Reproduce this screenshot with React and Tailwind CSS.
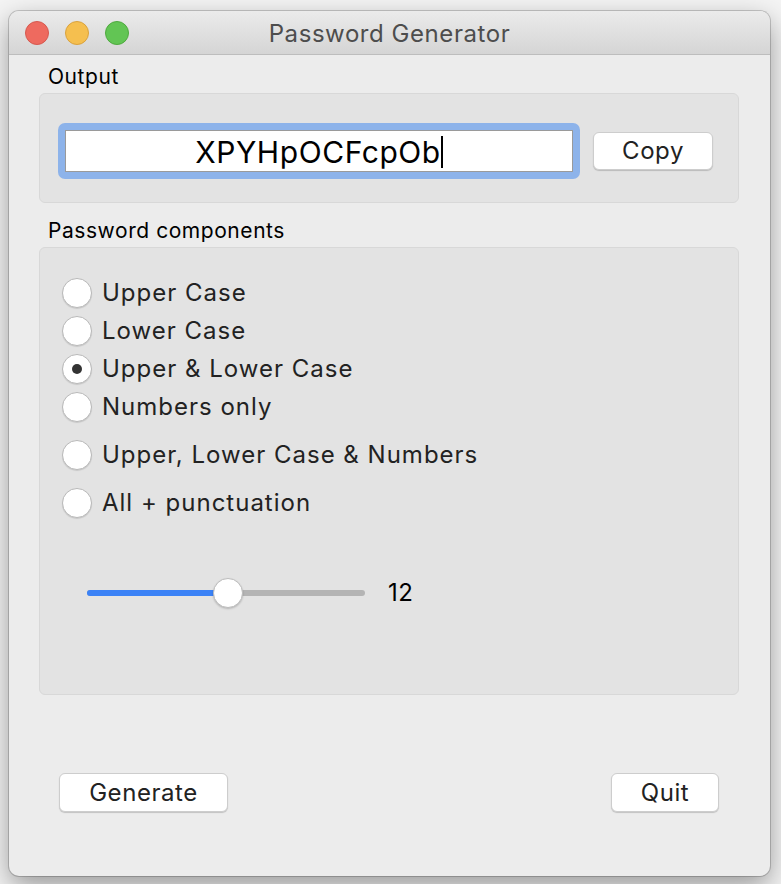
const font = { fontFamily: 'Inter, "Noto Sans", "Liberation Sans", sans-serif' };

const options = [
  { label: 'Upper Case', checked: false, gap: '' },
  { label: 'Lower Case', checked: false, gap: '' },
  { label: 'Upper & Lower Case', checked: true, gap: '' },
  { label: 'Numbers only', checked: false, gap: '' },
  { label: 'Upper, Lower Case & Numbers', checked: false, gap: 'mt-[10px]' },
  { label: 'All + punctuation', checked: false, gap: 'mt-[10px]' },
];

function Light({ bg, border }) {
  return <span className={`block w-[24px] h-[24px] rounded-full border ${bg} ${border}`} />;
}

function Radio({ label, checked, gap }) {
  return (
    <div className={`flex items-center h-[38px] ${gap}`}>
      <span className="flex items-center justify-center w-[30px] h-[30px] rounded-full bg-white border border-[#b9b9b9] shadow-[0_1px_1px_rgba(0,0,0,0.12)]">
        {checked && <span className="block w-[10px] h-[10px] rounded-full bg-[#333333]" />}
      </span>
      <span className="ml-[10px] text-[24px] leading-[30px] tracking-[1px] text-[#222222]">{label}</span>
    </div>
  );
}

function MacButton({ children, className }) {
  return (
    <button
      className={`flex items-center justify-center bg-white rounded-[6px] border border-[#cdcdcd] shadow-[0_1px_1px_rgba(0,0,0,0.18)] text-[24px] text-[#222222] ${className}`}
    >
      {children}
    </button>
  );
}

export default function App() {
  const pct = 50.7;
  return (
    <div className="w-[781px] h-[884px] bg-[#f4f4f4] pt-[11px] pl-[9px] tracking-[0.035em]" style={font}>
      <div className="w-[761px] h-[865px] rounded-[10px] bg-[#ececec] flex flex-col overflow-hidden shadow-[0_0_0_1px_rgba(0,0,0,0.18),0_10px_28px_rgba(0,0,0,0.38)]">
        {/* title bar */}
        <div className="relative h-[44px] flex items-center justify-center pt-[3px] bg-gradient-to-b from-[#ebebeb] to-[#d5d5d5] border-b border-[#bdbdbd]">
          <div className="absolute left-[16px] top-[10px] flex gap-[16px]">
            <Light bg="bg-[#ee6a5f]" border="border-[#d5594f]" />
            <Light bg="bg-[#f5bf4f]" border="border-[#d9a23e]" />
            <Light bg="bg-[#62c554]" border="border-[#4fa93f]" />
          </div>
          <span className="text-[24px] text-[#4d4d4d]">Password Generator</span>
        </div>

        <div className="flex flex-col pl-[30px] pr-[31px]">
          <div className="h-[38px] pt-[10px] pl-[9px] text-[21px] leading-[24px] text-black">Output</div>
          <div className="h-[110px] rounded-[6px] bg-[#e3e3e3] border border-[#d8d8d8] flex items-center pl-[18px] pt-[5px]">
            <div className="w-[522px] h-[56px] rounded-[7px] bg-[#8db3ea] p-[7px]">
              <div className="h-[42px] bg-white border border-[#9a9a9a] flex items-center justify-center pt-[2px]">
                <span className="text-[30px] leading-[36px] text-black">XPYHpOCFcpOb</span>
                <span className="block w-[2px] h-[32px] bg-black" />
              </div>
            </div>
            <MacButton className="ml-[13px] w-[120px] h-[38px]">Copy</MacButton>
          </div>

          <div className="h-[44px] pt-[16px] pl-[9px] text-[21px] leading-[24px] text-black">Password components</div>
          <div className="h-[448px] rounded-[6px] bg-[#e3e3e3] border border-[#d8d8d8] flex flex-col pt-[26px] pl-[22px]">
            {options.map((o) => (
              <Radio key={o.label} {...o} />
            ))}
            <div className="flex items-center h-[30px] mt-[56px] pl-[25px]">
              <div className="relative w-[278px] h-[30px] flex items-center">
                <div className="w-full h-[6px] rounded-full bg-[#b4b4b4]">
                  <div className="h-[6px] rounded-full bg-[#3b82f6]" style={{ width: `${pct}%` }} />
                </div>
                <span
                  className="absolute top-0 w-[30px] h-[30px] -ml-[15px] rounded-full bg-white border border-[#bdbdbd] shadow-[0_1px_2px_rgba(0,0,0,0.2)]"
                  style={{ left: `${pct}%` }}
                />
              </div>
              <span className="ml-[23px] text-[24px] text-black">12</span>
            </div>
          </div>

          <div className="flex justify-between mt-[78px] pl-[20px] pr-[20px]">
            <MacButton className="w-[169px] h-[39px]">Generate</MacButton>
            <MacButton className="w-[108px] h-[39px]">Quit</MacButton>
          </div>
        </div>
      </div>
    </div>
  );
}
